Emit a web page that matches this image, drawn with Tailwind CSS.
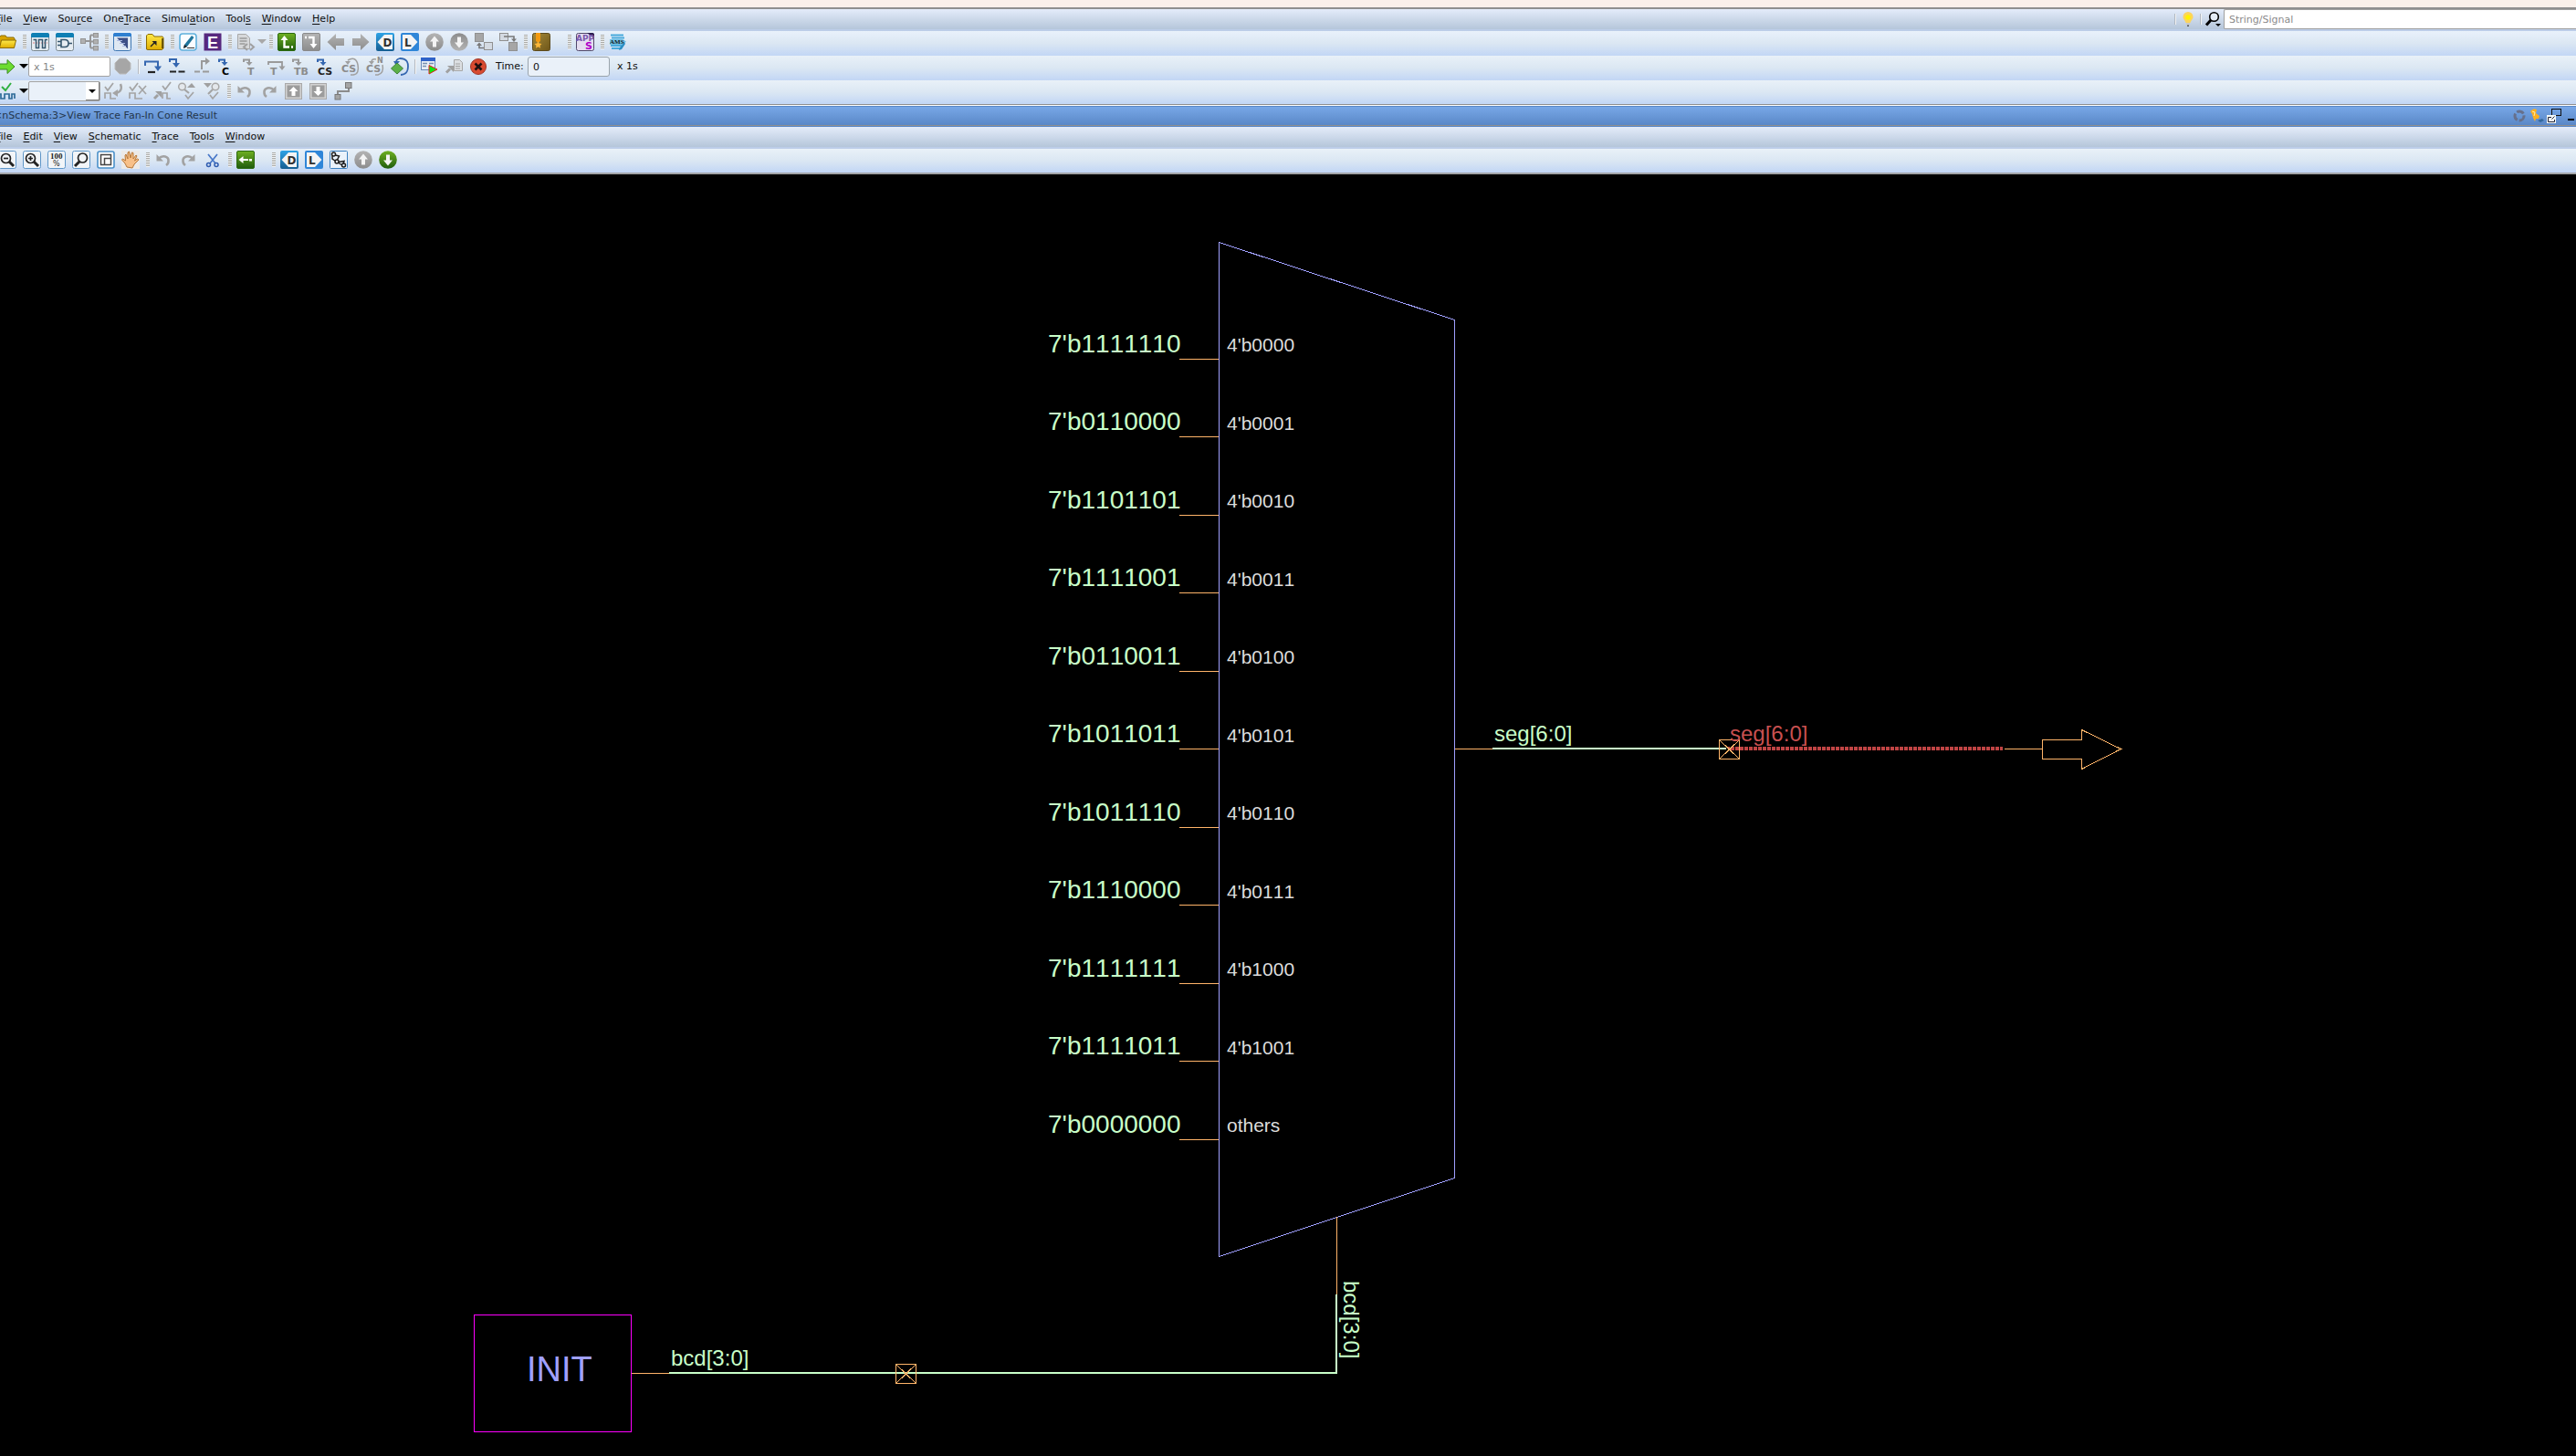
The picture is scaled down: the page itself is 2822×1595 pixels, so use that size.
<!DOCTYPE html>
<html lang="en">
<head>
<meta charset="utf-8">
<title>nSchema - View Trace Fan-In Cone Result</title>
<meta name="viewport" content="width=device-width, initial-scale=1">
<script src="https://cdn.jsdelivr.net/npm/@tailwindcss/browser@4"></script>
</head>
<body class="flex h-screen flex-col overflow-hidden bg-black font-['DejaVu_Sans',sans-serif] text-[11px] leading-4 text-[#101010]">

<!-- shared gradients and glyphs -->
<svg class="absolute size-0" aria-hidden="true">
  <defs>
    <linearGradient id="gBlue" x1="0" y1="0" x2="0" y2="1"><stop offset="0" stop-color="#2fa3e6"/><stop offset="1" stop-color="#155e92"/></linearGradient>
    <linearGradient id="gGreen" x1="0" y1="0" x2="0" y2="1"><stop offset="0" stop-color="#6fb022"/><stop offset="1" stop-color="#1f5c0c"/></linearGradient>
    <linearGradient id="gGray" x1="0" y1="0" x2="0" y2="1"><stop offset="0" stop-color="#b4b4b4"/><stop offset="1" stop-color="#8c8c8c"/></linearGradient>
    <linearGradient id="gYellow" x1="0" y1="0" x2="0" y2="1"><stop offset="0" stop-color="#ffe94a"/><stop offset="1" stop-color="#e0ae00"/></linearGradient>
    <linearGradient id="gGold" x1="0" y1="0" x2="1" y2="1"><stop offset="0" stop-color="#a58a3a"/><stop offset="1" stop-color="#6f5618"/></linearGradient>
    <symbol id="folder" viewBox="0 0 20 20"><path d="M1.500 16V4.500L3 3h5l1.500 2H17l1 1.500V8" fill="#d8a400" stroke="#8a6a00"/><path d="M1.500 16.500L3.500 8h16l-2 8.500z" fill="url(#gYellow)" stroke="#8a6a00"/></symbol>
    <symbol id="roundUp" viewBox="0 0 20 20"><circle cx="10" cy="10" r="9.800" fill="url(#gGray)"/><path d="M10 3.500l5 6h-3v6H8v-6H5z" fill="#f4f4f4"/></symbol>
    <symbol id="undo" viewBox="0 0 20 20"><path d="M5 8.500C9 4.500 16 6 15.500 11.500c0 2-1 3.500-2.500 4.500" fill="none" stroke="#a2a2a2" stroke-width="2.600"/><path d="M2.500 4v7.500H10z" fill="#a2a2a2"/></symbol>
    <symbol id="dTag" viewBox="0 0 20 20"><rect width="20" height="20" rx="2" fill="url(#gBlue)"/><path d="M1.500 10L9 2h9v16H9z" fill="#f4f4f4"/><text x="7.500" y="14.500" font-size="12" font-weight="700" fill="#303030">D</text></symbol>
    <symbol id="lTag" viewBox="0 0 20 20"><rect width="20" height="20" rx="2" fill="#2f86d8"/><path d="M18.500 10L11 2H2v16h9z" fill="#f4f4f4"/><text x="4" y="14.500" font-size="12" font-weight="700" fill="#303030">L</text></symbol>
    <symbol id="zoomTile" viewBox="0 0 20 20"><rect x=".5" y=".5" width="19" height="19" rx="2" fill="#f2f5f8" stroke="#5e96c8"/></symbol>
  </defs>
</svg>

<div class="h-2 shrink-0 bg-[#faf0ea]"></div>

<header class="shrink-0 [&_svg]:overflow-visible">
  <!-- main menu bar -->
  <div class="flex h-[26px] items-stretch border-t-2 border-b-2 border-t-[#8f8f8f] border-b-[#bccde8] bg-linear-to-b from-[#e4ecfa] to-[#b5c6da]">
    <nav aria-label="Main menu" class="-ml-[11px] flex items-center underline-offset-2 [&>button]:px-[6px]">
      <button><u>F</u>ile</button>
      <button><u>V</u>iew</button>
      <button>Sou<u>r</u>ce</button>
      <button>One<u>T</u>race</button>
      <button>Simul<u>a</u>tion</button>
      <button>Tool<u>s</u></button>
      <button><u>W</u>indow</button>
      <button><u>H</u>elp</button>
    </nav>
    <div class="ml-auto flex items-center">
      <span class="h-3 w-px bg-[#f2f2f2] shadow-[-1px_0_#b0b8c2]"></span>
      <button aria-label="Tips" class="ml-[5px] mr-[6px]"><svg class="h-4 w-[16px]" viewBox="0 0 16 16"><path d="M8 0a5.500 5.500 0 0 0-5.500 5.500C2.500 8.500 5 9 5.500 12h5c.5-3 3-3.500 3-6.500A5.500 5.500 0 0 0 8 0z" fill="#fcd45c"/><circle cx="8" cy="6" r="2.800" fill="#fff200"/><path d="M6 12h4v2.500H6z" fill="#c8c8c8"/><path d="M7 14.500h2V16H7z" fill="#555"/></svg></button>
      <span class="h-3 w-px bg-[#f2f2f2] shadow-[-1px_0_#b0b8c2]"></span>
      <button aria-label="Search options" class="ml-[4px] mr-[3px]"><svg class="h-[18px] w-[17px]" viewBox="0 0 17 18"><circle cx="9.500" cy="6.500" r="4.800" fill="#e4ecf6" stroke="#000" stroke-width="1.600"/><path d="M6 10l-5 5.500" stroke="#000" stroke-width="3"/><path d="M11 14h6l-3 3z"/></svg></button>
      <input aria-label="String/Signal" placeholder="String/Signal" class="h-[22px] w-[386px] rounded-l-[2px] border border-r-0 border-[#a0a0a0] bg-white px-[5px] pt-px placeholder:text-[#8a8a8a]">
    </div>
  </div>

  <!-- file, trace and navigation tools -->
  <div role="toolbar" aria-label="Main tools" class="-ml-[6px] flex h-[27px] items-center bg-linear-to-b from-[#e9f1fb] via-[#dbe7f3] to-[#c2d6f5] pb-[3px] [&>button]:w-[27px] [&>button]:pl-1 [&>button]:shrink-0 [&_svg]:size-5 [&>i]:ml-1 [&>i]:mr-[1px] [&>i]:h-4 [&>i]:w-1 [&>i]:bg-[repeating-linear-gradient(#a9aaa6_0_1px,#f2f4f6_1px_2px)]">
    <button aria-label="Open"><svg><use href="#folder"/></svg></button>
    <i></i>
    <button aria-label="New waveform"><svg viewBox="0 0 20 20"><rect x=".5" y=".5" width="19" height="19" rx="2" fill="#e6edf2" stroke="#7a8890"/><path d="M0 2q0-2 2-2h16q2 0 2 2v3H0z" fill="#0f7fb4"/><path d="M2 11h16" stroke="#e08080" stroke-dasharray="2 1"/><path d="M2.500 7.500h3v9h3v-9h4v9h3v-9H18" fill="none" stroke="#34566e" stroke-width="1.500"/></svg></button>
    <button aria-label="New schematic"><svg viewBox="0 0 20 20"><rect x=".5" y=".5" width="19" height="19" rx="2" fill="#e6edf2" stroke="#7a8890"/><path d="M0 2q0-2 2-2h16q2 0 2 2v3H0z" fill="#0f7fb4"/><path d="M6 7.500h4q4 0 4 4t-4 4H6zM2 9.500h4M2 13.500h4M14 11.500h4" fill="none" stroke="#34566e" stroke-width="1.600"/></svg></button>
    <button aria-label="Hierarchy"><svg viewBox="0 0 20 20"><g fill="#b0b0b0" stroke="#969696"><path d="M6 9h5M11 2.500v14M11 2.500h4M11 9.500h4M11 16.500h4" fill="none" stroke-width="2"/><rect x=".5" y="6.500" width="5" height="5"/><rect x="14.500" y=".5" width="5" height="4.500"/><rect x="14.500" y="7.500" width="5" height="4.500"/><rect x="14.500" y="14.500" width="5" height="4.500"/></g></svg></button>
    <i></i>
    <button aria-label="Memory view"><svg viewBox="0 0 20 20"><rect x=".5" y=".5" width="19" height="19" rx="2" fill="#dfe8f2" stroke="#3f78b4"/><path d="M0 2q0-2 2-2h16q2 0 2 2v2H0z" fill="#2f7fd0"/><path d="M4 5.500h12v12z" fill="#3d4f86"/><path d="M4 8.500h6M7 11.500h6M10 14.500h4" stroke="#aab8e0"/></svg></button>
    <i></i>
    <button aria-label="Open shortcut"><svg viewBox="0 0 20 20"><path d="M.5 18V3L2 1.500h5L9 4h9l1 1.500V17l-1.500 1.500H2z" fill="url(#gYellow)" stroke="#8a6a00"/><path d="M18 6v11" stroke="#4a3a00" stroke-width="1.500"/><path d="M5 15l4-4" stroke="#222" stroke-width="1.500"/><path d="M6.500 9h5v5z" fill="#222"/></svg></button>
    <i></i>
    <button aria-label="Edit source"><svg viewBox="0 0 20 20"><rect x="1" y="1" width="18" height="18" rx="3" fill="#fbfdff" stroke="#5fb0dc" stroke-width="1.600"/><path d="M6 13L14 3l2.500 2L9 15l-4 2z" fill="#20759c"/><path d="M5 17l1-4 3 2z" fill="#222"/><path d="M9 16.500h8" stroke="#333"/></svg></button>
    <button aria-label="Editor"><svg viewBox="0 0 20 20"><rect x=".5" y=".5" width="19" height="19" fill="#57287e"/><text x="4" y="16.500" font-size="18" font-weight="700" font-family="Liberation Sans, sans-serif" fill="#fff">E</text></svg></button>
    <i></i>
    <button aria-label="Source list"><svg viewBox="0 0 20 20"><path d="M1.500 1.500h9l4 4v12h-13z" fill="#d6d8da" stroke="#a8a8a8"/><path d="M3.500 6h8M3.500 9h8M3.500 12h6" stroke="#9a9a9a" stroke-width="1.300"/><path d="M12 12l-4 3.500 4 3.500M15 12l4 3.500-4 3.500" fill="none" stroke="#a0a0a0" stroke-width="2"/></svg></button>
    <button aria-label="Source list menu" class="!w-[9px] !pl-0"><svg class="!h-[6px] !w-[10px]" viewBox="0 0 10 6"><path d="M0 0h10L5 5z" fill="#a8a8a8"/></svg></button>
    <i></i>
    <button aria-label="Trace load"><svg viewBox="0 0 20 20"><rect x=".5" y=".5" width="19" height="19" rx="1.500" fill="url(#gGreen)" stroke="#2c6a10"/><path d="M7.500 7v8.500H13M15 15.500h2" fill="none" stroke="#fff" stroke-width="2.400"/><path d="M3.500 8l4-5 4 5z" fill="#fff"/></svg></button>
    <button aria-label="Trace driver"><svg viewBox="0 0 20 20"><rect x=".5" y=".5" width="19" height="19" rx="1.500" fill="url(#gGray)" stroke="#8a8a8a"/><path d="M3 5h2M7 5h5.500v7" fill="none" stroke="#fff" stroke-width="2.400"/><path d="M8.500 12l4 5 4-5z" fill="#fff"/></svg></button>
    <button aria-label="Back"><svg viewBox="0 0 20 20"><path d="M.5 10L10 1v5h9v8h-9v5z" fill="url(#gGray)"/></svg></button>
    <button aria-label="Forward"><svg viewBox="0 0 20 20"><path d="M19.500 10L10 1v5H1v8h9v5z" fill="url(#gGray)"/></svg></button>
    <button aria-label="Show drivers"><svg><use href="#dTag"/></svg></button>
    <button aria-label="Show loads"><svg><use href="#lTag"/></svg></button>
    <button aria-label="Previous"><svg><use href="#roundUp"/></svg></button>
    <button aria-label="Next"><svg class="rotate-180"><use href="#roundUp"/></svg></button>
    <button aria-label="Show calling"><svg viewBox="0 0 20 20"><rect x=".5" y=".5" width="9" height="9" fill="#a6a6a6" stroke="#909090"/><rect x="10.500" y="10.500" width="9" height="8" fill="#d4dae2" stroke="#909090"/><path d="M10 16.500H5V13" fill="none" stroke="#787878" stroke-width="1.600"/><path d="M2 14l3-3.500L8 14z" fill="#787878"/></svg></button>
    <button aria-label="Show definition"><svg viewBox="0 0 20 20"><rect x=".5" y=".5" width="9" height="8" fill="#d4dae2" stroke="#909090"/><rect x="10.500" y="10.500" width="9" height="9" fill="#a6a6a6" stroke="#909090"/><path d="M5 4h11v3" fill="none" stroke="#787878" stroke-width="1.600"/><path d="M13 6.500h6L16 10z" fill="#787878"/></svg></button>
    <i></i>
    <button aria-label="Bookmark"><svg viewBox="0 0 20 20"><rect x=".5" y=".5" width="19" height="19" rx="2" fill="url(#gGold)" stroke="#5c4a1c"/><path d="M4 0h5v9l-2.500 2L4 9z" fill="#f39a10"/><path d="M6.500 9l1.200 2.600 2.800.3-2 2 .5 2.800-2.500-1.400L4 16.700l.5-2.800-2-2 2.800-.3z" fill="#ffb838"/></svg></button>
    <span class="w-3"></span>
    <i></i>
    <button aria-label="Apps"><svg viewBox="0 0 20 20"><rect x=".5" y=".5" width="19" height="19" rx="2" fill="#e4dcf0" stroke="#50486a"/><path d="M12 0h6q2 0 2 2v4z" fill="#2a1c50"/><text x="0" y="9" font-size="9" font-weight="700" fill="#7a58ac">APP</text><text x="10" y="18" font-size="11" font-weight="700" fill="#b000c8">S</text></svg></button>
    <i></i>
    <button aria-label="AMS"><svg viewBox="0 0 20 20"><path d="M2 2.500h14M3 5.500h14M2 14h12M3 17h9" stroke="#48aadc" stroke-width="1.800"/><path d="M1 7h14l4 2.500-4 3.500H1z" fill="#6fc0e6"/><text x="1" y="12" font-size="7" font-weight="700" font-family="Liberation Serif, serif" fill="#101820">AMS</text><path d="M17 10l-5 6-1 3 3-1 4-6z" fill="#2a8fc4"/></svg></button>
  </div>

  <!-- simulation stepping tools -->
  <div role="toolbar" aria-label="Simulation control" class="-ml-[6px] flex h-[27px] items-center bg-linear-to-b from-[#e9f1f8] via-[#dbe7f3] to-[#c2d6f5] pb-[3px] [&>button]:w-[27px] [&>button]:pl-1 [&>button]:shrink-0 [&_svg]:size-5 [&_text]:font-bold [&_text]:text-[11px] [&>i]:ml-[4px] [&>i]:mr-px [&>i]:h-4 [&>i]:w-px [&>i]:bg-[#f4f4f4] [&>i]:shadow-[-1px_0_#b4bac2]">
    <button aria-label="Run"><svg viewBox="0 0 20 20"><path d="M1 7h9V2.500L18 10l-8 7.500V13H1z" fill="#6cdc30" stroke="#3a8a20"/></svg></button>
    <button aria-label="Run menu" class="!w-[10px] !pl-0"><svg class="!h-[6px] !w-[10px]" viewBox="0 0 10 6"><path d="M0 0h10L5 5z"/></svg></button>
    <input aria-label="Run time" placeholder="x 1s" class="h-[22px] w-[90px] rounded-[2px] border border-[#a2a2a2] bg-white px-[5px] placeholder:text-[#858585]">
    <button aria-label="Stop"><svg viewBox="0 0 20 20"><path d="M6 1h7l5 5v7l-5 5H6l-5-5V6z" fill="#a6a6a6" stroke="#bcbcbc"/></svg></button>
    <i></i>
    <button aria-label="Next statement"><svg viewBox="0 0 20 20"><path d="M1 9V4.500h14V10" fill="none" stroke="#3567b0" stroke-width="2"/><path d="M11 9.500h8L15 15z" fill="#3567b0"/><path d="M4 16h8" stroke="#222" stroke-width="2.200"/></svg></button>
    <button aria-label="Step in"><svg viewBox="0 0 20 20"><path d="M1 5V2h7v4" fill="none" stroke="#3567b0" stroke-width="2"/><path d="M4 6h8l-4 5z" fill="#3567b0"/><path d="M1 15.500h7M10.500 15.500h7" stroke="#222" stroke-width="2.200"/></svg></button>
    <button aria-label="Step out"><svg viewBox="0 0 20 20"><path d="M9 13V4h5" fill="none" stroke="#9a9a9a" stroke-width="2"/><path d="M13 0l5 4-5 4z" fill="#9a9a9a"/><path d="M1 15.500h6M10 15.500h7" stroke="#9a9a9a" stroke-width="2.200"/></svg></button>
    <button aria-label="Next in current"><svg viewBox="0 0 20 20"><path d="M1 5V2.500h6V5" fill="none" stroke="#3567b0" stroke-width="2"/><path d="M3.500 5h7L7 9z" fill="#3567b0"/><text x="4" y="19">C</text></svg></button>
    <button aria-label="Next in thread"><svg viewBox="0 0 20 20"><path d="M1 5V2.500h6V5" fill="none" stroke="#9a9a9a" stroke-width="2"/><path d="M3.500 5h7L7 9z" fill="#9a9a9a"/><text x="5" y="19" fill="#8c8c8c">T</text></svg></button>
    <button aria-label="Next thread"><svg viewBox="0 0 20 20"><path d="M1 8V5h15v5" fill="none" stroke="#9a9a9a" stroke-width="1.800"/><path d="M12.500 9.500h7L16 14z" fill="#9a9a9a"/><text x="3" y="19" fill="#8c8c8c">T</text></svg></button>
    <button aria-label="Next in testbench"><svg viewBox="0 0 20 20"><path d="M1 5V2.500h6V5" fill="none" stroke="#9a9a9a" stroke-width="2"/><path d="M3.500 5h7L7 9z" fill="#9a9a9a"/><text x="2" y="19" fill="#8c8c8c">TB</text></svg></button>
    <button aria-label="Next in constraint solver"><svg viewBox="0 0 20 20"><path d="M1 5V2.500h6V5" fill="none" stroke="#3567b0" stroke-width="2"/><path d="M3.500 5h7L7 9z" fill="#3567b0"/><text x="1" y="19" fill="#222">CS</text></svg></button>
    <button aria-label="Loop constraint solver"><svg viewBox="0 0 20 20"><path d="M7 3q9-5 11 5t-5 11h-3" fill="none" stroke="#a0a0a0" stroke-width="1.500"/><path d="M4 4h6L7 8z" fill="#a0a0a0"/><text x="0" y="16" fill="#8c8c8c">CS</text></svg></button>
    <button aria-label="Loop next constraint solver"><svg viewBox="0 0 20 20"><path d="M6 5q0-4 5-3M18 8q2 9-5 11h-3" fill="none" stroke="#a0a0a0" stroke-width="1.500"/><path d="M3 4h6L6 8z" fill="#a0a0a0"/><text x="0" y="16" fill="#8c8c8c">CS</text><text x="12" y="6" fill="#8c8c8c" class="!text-[8px]">N</text></svg></button>
    <button aria-label="Restart loop"><svg viewBox="0 0 20 20"><path d="M6 5q0-3 4-4c9 0 9 6 9 9s-1 9-8 9" fill="none" stroke="#3567b0" stroke-width="1.800"/><path d="M3 4h7L6 9z" fill="#3567b0"/><path d="M7 6l6.500 6L7 18l-6.500-6z" fill="#5cb048" stroke="#3c8038"/></svg></button>
    <i></i>
    <button aria-label="Interactive debug"><svg viewBox="0 0 20 20"><rect x=".5" y=".5" width="15" height="13" fill="#e8eef6" stroke="#6888b8"/><path d="M0 0h16v4H0z" fill="#2f62c8"/><path d="M2 6.500h5M2 9.500h4M9 6.500h5" stroke="#7890b0" stroke-width="1.500"/><path d="M9 8.500l9 4.500-9 5z" fill="#10e810" stroke="#e02020"/></svg></button>
    <button aria-label="Go to source"><svg viewBox="0 0 20 20"><path d="M9.500 2.500h6l3 3v9h-9z" fill="#dcdfe2" stroke="#a6a6a6"/><path d="M11 7h5M11 9.500h5M11 12h5" stroke="#a0a0a0"/><path d="M1 16.500l4-4" stroke="#a0a0a0" stroke-width="3"/><path d="M2 9h7v7z" fill="#a0a0a0"/></svg></button>
    <button aria-label="Terminate"><svg viewBox="0 0 20 20"><circle cx="9" cy="10" r="8.500" fill="#d84a30" stroke="#a0382a"/><path d="M5.500 6.500l7 7M12.500 6.500l-7 7" stroke="#201010" stroke-width="2.600"/></svg></button>
    <label for="time" class="ml-[5px] w-[35px]">Time:</label>
    <input id="time" value="0" class="h-[22px] w-[90px] rounded-[3px] border border-[#9aa4ac] bg-[#eaf1f9] px-[5px]">
    <span class="ml-2">x 1s</span>
  </div>

  <!-- waveform checks -->
  <div role="toolbar" aria-label="Annotation" class="-ml-[6px] flex h-[26px] items-center bg-linear-to-b from-[#e9f1f8] via-[#dbe7f3] to-[#c2d6f5] pb-[2px] [&>button]:w-[27px] [&>button]:pl-1 [&>button]:shrink-0 [&_svg]:size-5 [&>i]:ml-1 [&>i]:mr-[1px] [&>i]:h-4 [&>i]:w-1 [&>i]:bg-[repeating-linear-gradient(#a9aaa6_0_1px,#f2f4f6_1px_2px)]">
    <button aria-label="Check signal"><svg viewBox="0 0 20 20"><path d="M0 13h3v5h4v-5h5v5h3v-5h3v5" fill="none" stroke="#2f6c98" stroke-width="1.700"/><path d="M4 5l4 4 6-8" fill="none" stroke="#30b040" stroke-width="2"/></svg></button>
    <button aria-label="Check signal menu" class="!w-[10px] !pl-0"><svg class="!h-[6px] !w-[10px]" viewBox="0 0 10 6"><path d="M0 0h10L5 5z"/></svg></button>
    <span class="relative flex w-[79px]">
      <select aria-label="Signal check" class="h-[22px] w-full appearance-none rounded-[2px] border border-[#a2a2a2] bg-[#eaf1f9]"><option></option></select>
      <span class="pointer-events-none absolute inset-y-px right-px flex w-[15px] items-center justify-center border-r border-b border-[#808080] bg-white"><svg class="!h-1 !w-2" viewBox="0 0 8 4"><path d="M0 0h8L4 4z"/></svg></span>
    </span>
    <button aria-label="Reload check"><svg viewBox="0 0 20 20"><path d="M1 18v-6h6v6h6M1 5l3 4 6-8" fill="none" stroke="#a4a4a4" stroke-width="1.700"/><path d="M18 2q3 8-5 10" fill="none" stroke="#a4a4a4" stroke-width="2.400"/><path d="M9 12l6-4v8z" fill="#a4a4a4"/></svg></button>
    <button aria-label="Remove check"><svg viewBox="0 0 20 20"><path d="M1 18v-6h6v6h8M1 5l3 4 6-8M11 4l8 9M19 4l-8 9" fill="none" stroke="#a4a4a4" stroke-width="1.700"/></svg></button>
    <button aria-label="Jump to check"><svg viewBox="0 0 20 20"><path d="M10 18v-6h5v6h4M10 4l3 4 6-8" fill="none" stroke="#a4a4a4" stroke-width="1.700"/><path d="M1 18l4-4" stroke="#a0a0a0" stroke-width="3"/><path d="M2 10h7v7z" fill="#a0a0a0"/></svg></button>
    <button aria-label="Search up"><svg viewBox="0 0 20 20"><circle cx="4.500" cy="5" r="3.800" fill="#e4e8ec" stroke="#a8a8a8" stroke-width="1.500"/><path d="M7 8l5 4" stroke="#a4a4a4" stroke-width="2.200"/><path d="M10 6l5-5 4 5z" fill="#a0a0a0"/><path d="M8 14l3 4 6-7" fill="none" stroke="#a4a4a4" stroke-width="1.700"/></svg></button>
    <button aria-label="Search down"><svg viewBox="0 0 20 20"><circle cx="14" cy="5" r="3.800" fill="#e4e8ec" stroke="#a8a8a8" stroke-width="1.500"/><path d="M11 8l-5 5" stroke="#a4a4a4" stroke-width="2.200"/><path d="M1 1h9L5.500 6z" fill="#a0a0a0"/><path d="M8 14l3 4 6-7" fill="none" stroke="#a4a4a4" stroke-width="1.700"/></svg></button>
    <i></i>
    <button aria-label="Undo"><svg><use href="#undo"/></svg></button>
    <button aria-label="Redo"><svg class="-scale-x-100"><use href="#undo"/></svg></button>
    <button aria-label="Move up"><svg viewBox="0 0 20 20"><rect x=".5" y="1.500" width="18" height="17" fill="#d2d2d2" stroke="#a8a8a8"/><rect x="2.500" y="3.500" width="14" height="13" fill="#9c9c9c"/><path d="M9.500 5l5 5h-3v5h-4v-5h-3z" fill="#fff"/></svg></button>
    <button aria-label="Move down"><svg viewBox="0 0 20 20"><rect x=".5" y="1.500" width="18" height="17" fill="#d2d2d2" stroke="#a8a8a8"/><rect x="2.500" y="3.500" width="14" height="13" fill="#9c9c9c"/><path d="M9.500 15l5-5h-3V5h-4v5h-3z" fill="#fff"/></svg></button>
    <button aria-label="Connect"><svg viewBox="0 0 20 20"><path d="M4 14v-4h12V6" fill="none" stroke="#8c8c8c" stroke-width="2"/><rect x="1" y="13.500" width="6" height="5.500" fill="#a4a4a4" stroke="#787878"/><rect x="12.500" y=".5" width="6.500" height="6" fill="#a4a4a4" stroke="#787878"/></svg></button>
  </div>

  <!-- sub-window title bar -->
  <div class="flex h-6 items-center border-t border-b border-[#8f8f8f] bg-white pt-px">
    <div class="flex h-full w-full items-center border-t border-[#5a88c8] bg-linear-to-b from-[#78a7e7] to-[#5a88c7] text-[#24364c]">
      <h1 class="-ml-[7px] whitespace-nowrap">&lt;nSchema:3&gt;View Trace Fan-In Cone Result</h1>
      <div class="ml-auto flex items-center">
        <button aria-label="Sync" class="mr-1"><svg class="size-[14px]" viewBox="0 0 14 14"><circle cx="7" cy="7" r="5" fill="none" stroke="#66708c" stroke-width="3" stroke-dasharray="8 2"/></svg></button>
        <button aria-label="Pin" class="mr-[3px]"><svg class="size-4" viewBox="0 0 16 16"><path d="M9 13l5-2 2 2-4 2z" fill="#34689c"/><path d="M1 3q3-4 7-2l-1 4 4 3-1 3H7l-1 3-2-4-1-4z" fill="#ffb020"/><path d="M3 3l3 1-1 4" fill="none" stroke="#fff0b0"/></svg></button>
        <button aria-label="Undock" class="mr-[7px]"><svg class="size-4" viewBox="0 0 16 16"><rect x="5.500" y=".5" width="10" height="7" fill="none" stroke="#111"/><rect x="0" y="7" width="10" height="9" fill="#f4fafa"/><path d="M5 9.500H1.500v5h7V12M5.500 11.500l3-3" fill="none" stroke="#223"/></svg></button>
        <button aria-label="Minimize" class="mr-[2px] mt-[7px]"><span class="block h-[2px] w-[7px] bg-black"></span></button>
      </div>
    </div>
  </div>

  <!-- schematic menu bar -->
  <div class="flex h-[25px] items-stretch border-t border-b-2 border-t-[#5a88c8] border-b-[#bccde8] bg-linear-to-b from-[#e4ecfa] to-[#b5c6da]">
    <nav aria-label="Schematic menu" class="-ml-[11px] flex items-center underline-offset-2 [&>button]:px-[6px]">
      <button><u>F</u>ile</button>
      <button><u>E</u>dit</button>
      <button><u>V</u>iew</button>
      <button><u>S</u>chematic</button>
      <button><u>T</u>race</button>
      <button>T<u>o</u>ols</button>
      <button><u>W</u>indow</button>
    </nav>
  </div>

  <!-- schematic tools -->
  <div role="toolbar" aria-label="Schematic tools" class="-ml-[6px] flex h-[28px] items-center border-b-2 border-[#a2a4a8] bg-linear-to-b from-[#e9f1f8] via-[#dbe7f3] to-[#c2d6f5] pb-[2px] [&>button]:w-[27px] [&>button]:pl-1 [&>button]:shrink-0 [&_svg]:size-5 [&>i]:ml-1 [&>i]:mr-[1px] [&>i]:h-4 [&>i]:w-1 [&>i]:bg-[repeating-linear-gradient(#a9aaa6_0_1px,#f2f4f6_1px_2px)]">
    <button aria-label="Zoom out"><svg viewBox="0 0 20 20"><use href="#zoomTile"/><circle cx="8.500" cy="8.500" r="5" fill="none" stroke="#222" stroke-width="1.700"/><path d="M6 8.500h5" stroke="#222" stroke-width="1.700"/><path d="M12 12l5 5" stroke="#222" stroke-width="3"/></svg></button>
    <button aria-label="Zoom in"><svg viewBox="0 0 20 20"><use href="#zoomTile"/><circle cx="8.500" cy="8.500" r="5" fill="none" stroke="#222" stroke-width="1.700"/><path d="M6 8.500h5M8.500 6v5" stroke="#222" stroke-width="1.700"/><path d="M12 12l5 5" stroke="#222" stroke-width="3"/></svg></button>
    <button aria-label="Zoom 100%"><svg viewBox="0 0 20 20"><use href="#zoomTile"/><text x="3" y="9" font-size="9" font-weight="700" font-family="Liberation Serif, serif" fill="#222">100</text><text x="6" y="17" font-size="8" fill="#222">%</text></svg></button>
    <button aria-label="Zoom area"><svg viewBox="0 0 20 20"><use href="#zoomTile"/><circle cx="11.500" cy="8" r="5" fill="none" stroke="#222" stroke-width="1.700"/><path d="M8 12l-5 5" stroke="#222" stroke-width="3"/></svg></button>
    <button aria-label="Fit window"><svg viewBox="0 0 20 20"><rect x="1" y="1" width="18" height="18" rx="2" fill="#fff" stroke="#4a90c8" stroke-width="1.600"/><path d="M4.500 4.500h11v11h-11zM8.500 15.500v-7h7" fill="none" stroke="#444" stroke-width="1.500"/></svg></button>
    <button aria-label="Pan"><svg viewBox="0 0 20 20"><rect width="20" height="20" fill="#eceae8"/><path d="M6 18l-2-4-3.500-4 1-1 3 2L4 5l1-1 2 5 0-7 1.500-1L10 8l1.500-6 1.500.5L13 9l3-4 1 .8-2.500 5.200 3-2 1.500 1-5 5-2 4z" fill="#f8c088" stroke="#b87838"/></svg></button>
    <i></i>
    <button aria-label="Undo"><svg><use href="#undo"/></svg></button>
    <button aria-label="Redo"><svg class="-scale-x-100"><use href="#undo"/></svg></button>
    <button aria-label="Cut"><svg viewBox="0 0 20 20"><path d="M5 4l8 10M15 4L7 14" stroke="#4878c8" stroke-width="1.700"/><circle cx="5.500" cy="15.500" r="2" fill="none" stroke="#2f5cb0" stroke-width="1.500"/><circle cx="14" cy="15.500" r="2" fill="none" stroke="#2f5cb0" stroke-width="1.500"/></svg></button>
    <i></i>
    <button aria-label="Back trace"><svg viewBox="0 0 20 20"><rect x=".5" y=".5" width="19" height="19" rx="1.500" fill="url(#gGreen)" stroke="#2c6a10"/><path d="M2.500 10L7.500 6v3H13v2H7.500v3z" fill="#fff"/><path d="M14 9h3v2.500h-3z" fill="#fff"/></svg></button>
    <span class="w-3"></span>
    <i></i>
    <button aria-label="Show drivers"><svg><use href="#dTag"/></svg></button>
    <button aria-label="Show loads"><svg><use href="#lTag"/></svg></button>
    <button aria-label="Show path"><svg viewBox="0 0 20 20"><rect x=".5" y=".5" width="19" height="19" rx="1" fill="#eaf2fa" stroke="#3a80c0"/><g fill="none" stroke="#1c1c1c" stroke-width="1.500"><circle cx="4.500" cy="4" r="2"/><circle cx="8" cy="12" r="2"/><circle cx="15.500" cy="16" r="2"/><path d="M6.500 5l4 1-2 4M10 12.500l6-1-1 3M3 6v3l3 2M10 13.500l3 2"/></g></svg></button>
    <button aria-label="Push up"><svg><use href="#roundUp"/></svg></button>
    <button aria-label="Push down"><svg viewBox="0 0 20 20"><circle cx="10" cy="10" r="9.800" fill="url(#gGreen)"/><path d="M10 16.500l5-6h-3v-6H8v6H5z" fill="#f4f4f4"/></svg></button>
  </div>
</header>

<!-- schematic canvas -->
<main class="min-h-0 flex-1 bg-black">
  <svg class="block size-full font-['Liberation_Sans',sans-serif] [font-kerning:none]" viewBox="0 191 2822 1404" preserveAspectRatio="xMidYMin meet" role="img" aria-label="Fan-in cone of seg[6:0]">
    <g fill="none" shape-rendering="crispEdges">
      <path d="M1335.500 265.500L1593.500 350.500V1290.500L1335.500 1376.500z" stroke="#a0a0ff"/>
      <rect x="519.500" y="1440.500" width="172" height="128" stroke="#ff00ff"/>
      <g stroke="#ffb469">
        <path d="M1292 393.500h43M1292 478.500h43M1292 564.500h43M1292 649.500h43M1292 735.500h43M1292 820.500h43M1292 906.500h43M1292 991.500h43M1292 1077.500h43M1292 1162.500h43M1292 1248.500h43"/>
        <path d="M1594 820.500h43M2196 820.500h41M692 1504.500h43M1464.500 1333v86"/>
        <path d="M2237.500 810.500h43v-11l43 21-43 22v-11h-43z"/>
      </g>
      <path d="M1635 820h256M733 1504h731V1418" stroke="#c8ffc8" stroke-width="2"/>
      <path d="M1893 820h2" stroke="#c04444" stroke-width="4"/>
      <path d="M1896 820h298" stroke="#c04444" stroke-width="4" stroke-dasharray="4 1"/>
      <path d="M1883.500 810.500h22v21h-22zl22 21M1905.500 810.500l-22 21M981.500 1494.500h22v21h-22zl22 21M1003.500 1494.500l-22 21" stroke="#ffb469"/>
    </g>
    <g fill="#c8ffc8" font-size="28">
      <text x="1148" y="386">7'b1111110</text>
      <text x="1148" y="471">7'b0110000</text>
      <text x="1148" y="557">7'b1101101</text>
      <text x="1148" y="642">7'b1111001</text>
      <text x="1148" y="728">7'b0110011</text>
      <text x="1148" y="813">7'b1011011</text>
      <text x="1148" y="899">7'b1011110</text>
      <text x="1148" y="984">7'b1110000</text>
      <text x="1148" y="1070">7'b1111111</text>
      <text x="1148" y="1155">7'b1111011</text>
      <text x="1148" y="1241">7'b0000000</text>
    </g>
    <g fill="#dcdcdc" font-size="21">
      <text x="1344" y="385">4'b0000</text>
      <text x="1344" y="471">4'b0001</text>
      <text x="1344" y="556">4'b0010</text>
      <text x="1344" y="642">4'b0011</text>
      <text x="1344" y="727">4'b0100</text>
      <text x="1344" y="813">4'b0101</text>
      <text x="1344" y="898">4'b0110</text>
      <text x="1344" y="984">4'b0111</text>
      <text x="1344" y="1069">4'b1000</text>
      <text x="1344" y="1155">4'b1001</text>
      <text x="1344" y="1240">others</text>
    </g>
    <g fill="#c8ffc8" font-size="24">
      <text x="1637" y="812">seg[6:0]</text>
      <text x="1895" y="812" fill="#c85050">seg[6:0]</text>
      <text x="735" y="1496">bcd[3:0]</text>
      <text transform="translate(1472 1403) rotate(90)">bcd[3:0]</text>
    </g>
    <text x="577" y="1513" font-size="38" fill="#a0a0ff">INIT</text>
  </svg>
</main>
</body>
</html>
